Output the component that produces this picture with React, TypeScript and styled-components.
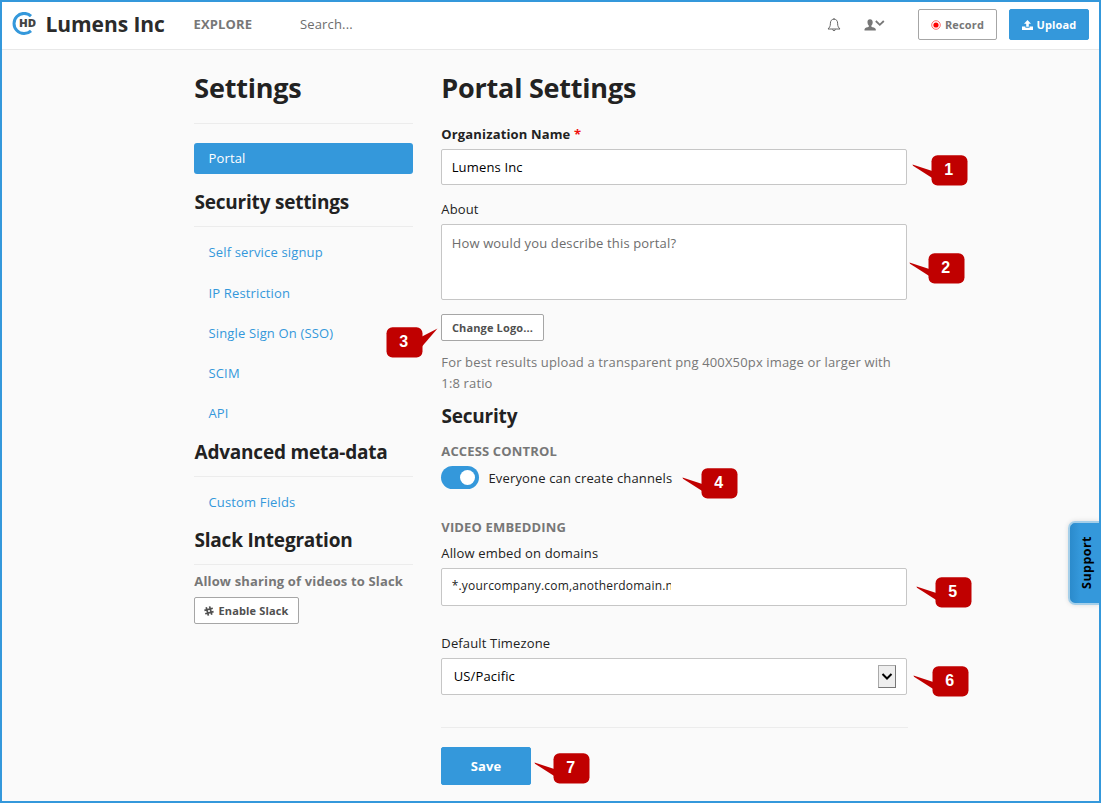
import React from 'react';
import styled, { createGlobalStyle } from 'styled-components';

const BLUE = '#3498db';

const GlobalStyle = createGlobalStyle`
  * { box-sizing: border-box; }
  body {
    margin: 0;
    background: #fafafa;
    color: #222;
    font-family: 'Open Sans', 'Noto Sans', sans-serif;
    font-size: 13px;
    letter-spacing: 0.15px;
  }
  h1, h2, h3, p { margin: 0; }
  button { font-family: inherit; margin: 0; }
`;

const Page = styled.div`
  position: relative;
  width: 1101px;
  height: 803px;
  border: 2px solid ${BLUE};
  overflow: hidden;
  background: #fafafa;
`;

const Header = styled.header`
  display: flex;
  align-items: center;
  height: 48px;
  padding: 0 10px 2px;
  background: #fff;
  border-bottom: 1px solid #e8e8e8;
`;

const Brand = styled.div`
  display: flex;
  align-items: center;
  width: 181.5px;
  padding-bottom: 2px;
  font-size: 21px;
  font-weight: 700;
  letter-spacing: -0.07px;
  line-height: 40px;
  color: #2b2b2b;
  white-space: nowrap;
`;

const BrandIcon = styled.svg`
  flex: none;
  margin-right: 9.5px;
`;

const ExploreLink = styled.a`
  width: 106.5px;
  padding-bottom: 2px;
  font-size: 13px;
  font-weight: 700;
  color: #777;
`;

const SearchField = styled.div`
  flex: 1;
  padding-bottom: 2px;
  color: #6d6d6d;
`;

const HeaderIcon = styled.svg<{ $gap: number }>`
  flex: none;
  margin-right: ${(p) => p.$gap}px;
`;

const Button = styled.button<{ $w: number; $h: number; $primary?: boolean; $size?: number; $color?: string }>`
  display: flex;
  align-items: center;
  justify-content: center;
  flex: none;
  gap: 4px;
  width: ${(p) => p.$w}px;
  height: ${(p) => p.$h}px;
  padding: 0;
  border: 1px solid ${(p) => (p.$primary ? BLUE : '#a6a6a6')};
  border-radius: 2px;
  background: ${(p) => (p.$primary ? BLUE : '#fff')};
  color: ${(p) => (p.$primary ? '#fff' : p.$color ?? '#505050')};
  font-size: ${(p) => p.$size ?? 11}px;
  font-weight: 700;
  letter-spacing: 0.15px;
  line-height: 1;
  white-space: nowrap;
`;

const HeaderButtons = styled.div`
  display: flex;
  gap: 12px;
`;

const Columns = styled.div`
  display: grid;
  grid-template-columns: 219px 467px;
  column-gap: 28px;
  padding-left: 192px;
`;

const Title = styled.h1<{ $h: number }>`
  height: ${(p) => p.$h}px;
  padding: 18px 0 0 0.3px;
  font-size: 27px;
  line-height: 40px;
  font-weight: 700;
  letter-spacing: -0.22px;
  white-space: nowrap;
`;

const Rule = styled.div`
  height: 1px;
  background: #ececec;
`;

const ActiveItem = styled.div`
  margin-top: 19px;
  height: 31px;
  padding-left: 14.5px;
  border-radius: 3px;
  background: ${BLUE};
  color: #fff;
  line-height: 30px;
`;

const SideHeading = styled.h2<{ $top: number }>`
  margin-top: ${(p) => p.$top}px;
  height: 43px;
  padding-left: 0.5px;
  border-bottom: 1px solid #ececec;
  font-size: 19px;
  font-weight: 700;
  letter-spacing: -0.21px;
  line-height: 36px;
  white-space: nowrap;
`;

const NavList = styled.nav`
  display: flex;
  flex-direction: column;
  padding: 5px 0 0 14.5px;
`;

const NavLink = styled.a`
  height: 40px;
  line-height: 40px;
  color: ${BLUE};

  &:first-child:not(:last-child) {
    height: 41px;
  }
`;

const SlackNote = styled.p`
  height: 32px;
  padding-left: 0.3px;
  line-height: 33px;
  font-weight: 700;
  color: #777;
  white-space: nowrap;
`;

const Label = styled.div<{ $h: number; $lh: number; $strong?: boolean; $muted?: boolean }>`
  height: ${(p) => p.$h}px;
  padding-left: 0.3px;
  line-height: ${(p) => p.$lh}px;
  font-weight: ${(p) => (p.$strong ? 700 : 400)};
  color: ${(p) => (p.$muted ? '#777' : '#222')};
  white-space: nowrap;
`;

const Required = styled.span`
  color: #f01010;
`;

const Field = styled.div<{ $h: number; $lh: number; $color?: string }>`
  display: flex;
  width: 466px;
  height: ${(p) => p.$h}px;
  padding-left: 9.7px;
  border: 1px solid #c6c6c6;
  border-radius: 2px;
  background: #fff;
  color: ${(p) => p.$color ?? '#000'};
  line-height: ${(p) => p.$lh}px;
  white-space: nowrap;
`;

const DomainText = styled.span`
  width: 219.5px;
  overflow: hidden;
  font-size: 12px;
  letter-spacing: 0.2px;
  color: #222;
`;

const SelectText = styled.span`
  flex: 1;
  padding-left: 2px;
`;

const SelectArrow = styled.span`
  display: flex;
  align-items: center;
  justify-content: center;
  width: 18px;
  height: 23px;
  margin: 6px 10px 0 0;
  border: 1px solid #777;
  border-top-color: #aaa;
  border-left-color: #aaa;
  background: #eee;
`;

const Help = styled.p`
  padding: 11px 8px 0 0.3px;
  height: 57px;
  color: #777;
  line-height: 21px;
`;

const SectionTitle = styled.h2`
  height: 38px;
  padding-left: 0.5px;
  font-size: 19px;
  line-height: 36px;
  font-weight: 700;
  letter-spacing: -0.21px;
`;

const ToggleRow = styled.div`
  display: flex;
  height: 46px;
  gap: 9.5px;
  line-height: 25px;
`;

const Toggle = styled.span`
  display: flex;
  justify-content: flex-end;
  width: 38px;
  height: 23px;
  padding: 4px;
  border-radius: 12px;
  background: ${BLUE};
`;

const Knob = styled.span`
  width: 15px;
  height: 15px;
  border-radius: 50%;
  background: #fff;
`;

const FormGap = styled.div`
  height: 14px;
`;

const FormEnd = styled.div`
  padding: 32px 0 19px;
`;

const SupportTab = styled.div`
  position: absolute;
  right: 0;
  top: 519px;
  display: flex;
  align-items: center;
  justify-content: center;
  width: 31px;
  height: 84px;
  border: 2px solid #a5cfe9;
  border-right: 0;
  border-radius: 7px 0 0 7px;
  background: linear-gradient(90deg, #2b8bcc, ${BLUE} 35%);
  box-shadow: 0 0 5px rgba(0, 0, 0, 0.12);
`;

const SupportText = styled.span`
  writing-mode: vertical-rl;
  transform: rotate(180deg);
  margin: 0 0 1px 5px;
  color: #000;
  font-size: 12.5px;
  font-weight: 700;
  letter-spacing: 0.45px;
  line-height: 18px;
`;

/* Numbered markers float over the page, each pointing at one control. */
const Marker = styled.svg<{ $x: number; $y: number }>`
  position: absolute;
  left: ${(p) => p.$x}px;
  top: ${(p) => p.$y}px;
  overflow: visible;
`;

const MarkerText = styled.text`
  fill: #fff;
  font: 700 16px 'Liberation Sans', Arial, sans-serif;
  letter-spacing: 0;
  text-anchor: middle;
`;

const markers = [
  { n: 1, x: 929, y: 153 },
  { n: 2, x: 926, y: 251 },
  { n: 3, x: 384, y: 325, flip: true },
  { n: 4, x: 699, y: 466 },
  { n: 5, x: 933, y: 575 },
  { n: 6, x: 930, y: 664 },
  { n: 7, x: 551, y: 751 },
];

function Callout({ n, x, y, flip }: { n: number; x: number; y: number; flip?: boolean }) {
  return (
    <Marker $x={x} $y={y} width="37" height="31">
      <g fill="#c00000">
        <rect x="0.5" y="0.3" width="36" height="30.2" rx="6" />
        <path d={flip ? 'M36 9.5 L51.5 1.5 L36 19.5z' : 'M2 16.3 L-18.5 9.6 L-18 10.8 L2 23.5z'} />
      </g>
      <MarkerText x={17.8} y={20}>{n}</MarkerText>
    </Marker>
  );
}

export default function App() {
  return (
    <>
      <GlobalStyle />
      <Page>
        <Header>
          <Brand>
            <BrandIcon width="24" height="24" viewBox="0 0 24 24">
              <path d="M19 4.1 A10.1 10.1 0 1 0 19 18.9" fill="none" stroke={BLUE} strokeWidth="3" />
              <text x="7" y="15.2" fontSize="11" fontWeight="800" fill="#444" textLength="17" lengthAdjust="spacingAndGlyphs">HD</text>
            </BrandIcon>
            Lumens Inc
          </Brand>
          <ExploreLink>EXPLORE</ExploreLink>
          <SearchField>Search...</SearchField>
          <HeaderIcon $gap={23} width="14" height="14" viewBox="0 0 14 14" fill="none" stroke="#666">
            <path d="M7 1.2 C4.5 1.2 3.4 3 3.4 5.2 C3.4 8.6 2.4 9.5 1 11 H13 C11.6 9.5 10.6 8.6 10.6 5.2 C10.6 3 9.5 1.2 7 1.2z M7 0v1.2 M5.6 11.3 C5.8 13.2 8.2 13.2 8.4 11.3" />
          </HeaderIcon>
          <HeaderIcon $gap={33} width="21" height="12" viewBox="0 0 21 12">
            <path d="M6 0.2 C4 0.2 3.3 1.6 3.5 3.4 C3.6 5 4.2 5.8 4.8 6.4 V7.8 C3.5 8.4 0.8 8.6 0.5 10.2 V11.5 H11.8 V10.2 C11.4 8.6 8.6 8.4 7.4 7.8 V6.4 C8 5.8 8.6 5 8.7 3.4 C8.8 1.6 8 0.2 6 0.2z" fill="#777" />
            <path d="M11.8 2 L15.8 5.8 L19.8 2" fill="none" stroke="#777" strokeWidth="1.8" />
          </HeaderIcon>
          <HeaderButtons>
            <Button $w={79} $h={31} $color="#777">
              <svg width="10" height="10" viewBox="0 0 10 10">
                <circle cx="5" cy="5" r="4.3" fill="none" stroke="#ff5a5a" strokeWidth="0.9" />
                <circle cx="5" cy="5" r="2.6" fill="#f00" />
              </svg>
              Record
            </Button>
            <Button $w={80} $h={31} $primary>
              <svg width="11" height="10" viewBox="0 0 11 10" fill="#fff">
                <path d="M5.5 0 L9 3.8 H6.8 V6.8 H4.2 V3.8 H2z M0 6.6 H3.4 V7.7 H7.6 V6.6 H11 V10 H0z" />
              </svg>
              Upload
            </Button>
          </HeaderButtons>
        </Header>

        <Columns>
          <aside>
            <Title $h={73}>Settings</Title>
            <Rule />
            <ActiveItem>Portal</ActiveItem>
            <SideHeading $top={10}>Security settings</SideHeading>
            <NavList>
              <NavLink>Self service signup</NavLink>
              <NavLink>IP Restriction</NavLink>
              <NavLink>Single Sign On (SSO)</NavLink>
              <NavLink>SCIM</NavLink>
              <NavLink>API</NavLink>
            </NavList>
            <SideHeading $top={1}>Advanced meta-data</SideHeading>
            <NavList>
              <NavLink>Custom Fields</NavLink>
            </NavList>
            <SideHeading $top={0}>Slack Integration</SideHeading>
            <SlackNote>Allow sharing of videos to Slack</SlackNote>
            <Button $w={105} $h={27}>
              <svg width="10" height="10" viewBox="0 0 10 10" fill="none" stroke="#505050" strokeWidth="1.7">
                <path d="M2.2 1.2 L4.4 9.6 M5.6 0.4 L7.8 8.8 M0.4 4.4 L8.8 2.2 M1.2 7.8 L9.6 5.6" />
              </svg>
              Enable Slack
            </Button>
          </aside>

          <main>
            <Title $h={74}>Portal Settings</Title>
            <Label $h={25} $lh={20} $strong>
              Organization Name <Required>*</Required>
            </Label>
            <Field $h={36} $lh={34}>Lumens Inc</Field>
            <Label $h={39} $lh={48}>About</Label>
            <Field $h={76} $lh={36} $color="#6d6d6d">How would you describe this portal?</Field>
            <FormGap />
            <Button $w={103} $h={27}>Change Logo...</Button>
            <Help>For best results upload a transparent png 400X50px image or larger with 1:8 ratio</Help>
            <SectionTitle>Security</SectionTitle>
            <Label $h={30} $lh={30} $strong $muted>ACCESS CONTROL</Label>
            <ToggleRow>
              <Toggle><Knob /></Toggle>
              Everyone can create channels
            </ToggleRow>
            <Label $h={30} $lh={30} $strong $muted>VIDEO EMBEDDING</Label>
            <Label $h={26} $lh={22}>Allow embed on domains</Label>
            <Field $h={38} $lh={33}><DomainText>*.yourcompany.com,anotherdomain.n</DomainText></Field>
            <Label $h={52} $lh={74}>Default Timezone</Label>
            <Field $h={37} $lh={35}>
              <SelectText>US/Pacific</SelectText>
              <SelectArrow>
                <svg width="12" height="8" viewBox="0 0 12 8"><path d="M1.5 1 L6 5.5 L10.5 1" fill="none" stroke="#000" strokeWidth="2" /></svg>
              </SelectArrow>
            </Field>
            <FormEnd><Rule /></FormEnd>
            <Button $w={90} $h={38} $size={13} $primary>Save</Button>
          </main>
        </Columns>

        <SupportTab><SupportText>Support</SupportText></SupportTab>
        {markers.map((m) => <Callout key={m.n} {...m} />)}
      </Page>
    </>
  );
}
